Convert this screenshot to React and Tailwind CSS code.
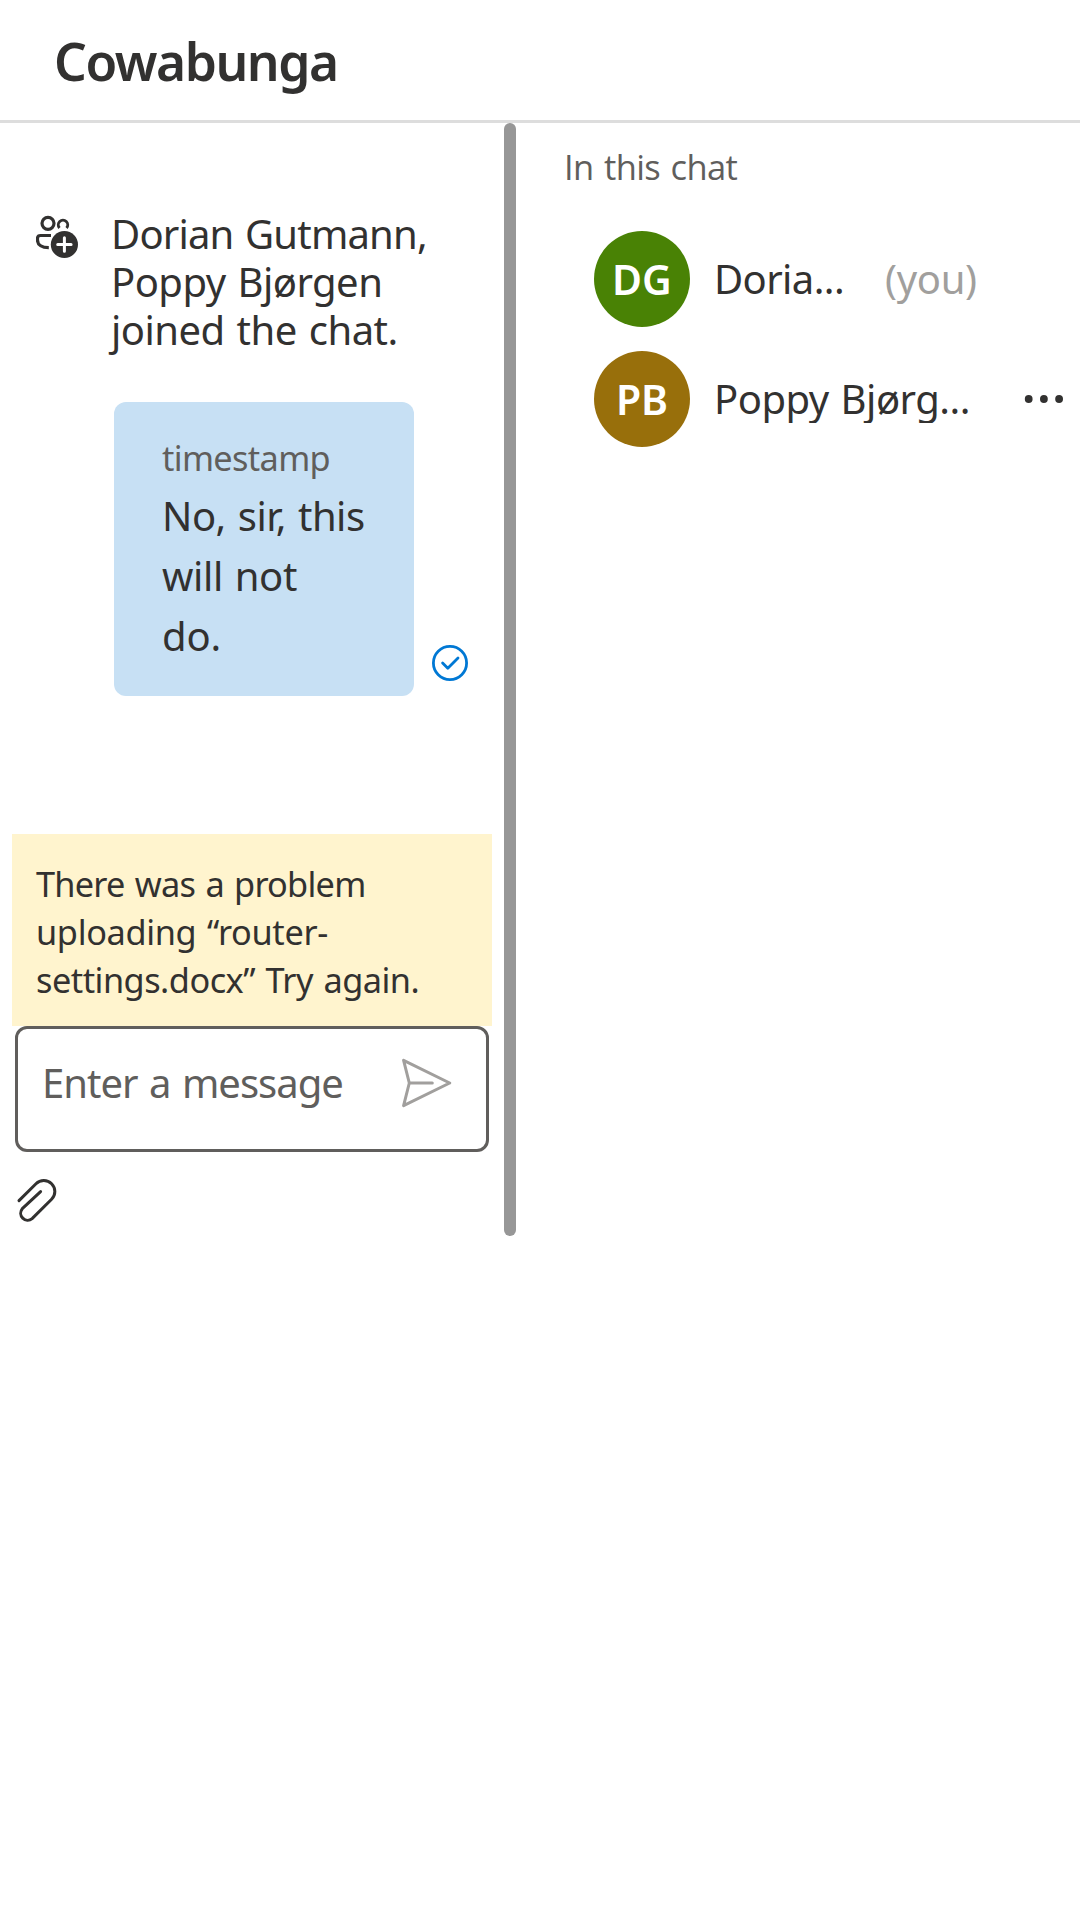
function PeopleAddIcon() {
  return (
    <svg className="mt-[5px] h-[45px] w-[45px] shrink-0" viewBox="36 215 45 45" fill="none" stroke="#323130" strokeWidth="3.2" strokeLinecap="butt">
      <circle cx="48" cy="223.3" r="6" />
      <path d="M59.5 228 A4.7 4.7 0 1 1 66.5 228" strokeWidth="2.9" />
      <path d="M51 235.5 H40.5 Q37.5 235.5 37.5 238.5 V240 C37.5 245 42 247.6 48.8 247.6" />
      <circle cx="64.4" cy="244.5" r="13.6" fill="#323130" stroke="none" />
      <path d="M64.4 237.8 V251.2 M57.7 244.5 H71.1" stroke="#fff" strokeWidth="3" strokeLinecap="round" />
    </svg>
  );
}

function SeenIcon() {
  return (
    <svg className="mb-[15px] ml-[18px] h-9 w-9" viewBox="0 0 36 36" fill="none" stroke="#0078d4" strokeWidth="2.8" strokeLinecap="round" strokeLinejoin="round">
      <circle cx="18" cy="18" r="16.6" />
      <path d="M10.6 18 L15.8 23.2 L26 13" />
    </svg>
  );
}

function SendIcon() {
  return (
    <svg className="mt-[29px] h-[51px] w-[51px]" viewBox="402 1058 51 51" fill="none" stroke="#a19f9d" strokeWidth="3" strokeLinejoin="round" strokeLinecap="round">
      <path d="M403.6 1060.3 L449.7 1083 L403.6 1105.7 L409.3 1083 Z M409.3 1083 H432.3" />
    </svg>
  );
}

function AttachIcon() {
  return (
    <svg className="ml-[15px] mt-[25px] h-[48px] w-[42px]" viewBox="15 1177 42 48" fill="none" stroke="#323130" strokeWidth="3" strokeLinecap="round" strokeLinejoin="round">
      <path d="M19 1200.6 L36 1183.7 A11 11 0 0 1 51.6 1199.3 L32.1 1218.6 A7 7 0 0 1 22.3 1208.7 L40.6 1191.6" />
    </svg>
  );
}

function Avatar({ initials, color }) {
  return (
    <div className={`flex h-24 w-24 shrink-0 items-center justify-center rounded-full text-[41px] leading-[60px] font-semibold text-white ${color}`}>
      <span>{initials}</span>
    </div>
  );
}

export default function App() {
  return (
    <div className="h-[1920px] w-[1080px] overflow-hidden bg-white font-['Noto_Sans',sans-serif] text-[40px] whitespace-nowrap text-[#323130] [word-spacing:2px]">
      <header className="h-[123px] border-b-[3px] border-[#dddddd] pt-[2px] pl-[54px]">
        <h1 className="text-[51.5px] leading-[118px] font-semibold tracking-[-1.45px]">Cowabunga</h1>
      </header>
      <div className="flex">
        <section className="flex h-[1113px] w-[504px] flex-col">
          <div className="flex pt-[87px] pl-[36px] leading-[48px]">
            <PeopleAddIcon />
            <div className="ml-[30px]">
              <div className="tracking-[-0.82px]">Dorian Gutmann,</div>
              <div className="tracking-[-0.52px]">Poppy Bjørgen</div>
              <div className="tracking-[-0.5px]">joined the chat.</div>
            </div>
          </div>
          <div className="mt-[48px] flex items-end pl-[114px]">
            <div className="h-[294px] w-[300px] rounded-[12px] bg-[#c7e0f4] pt-[32px] pl-[48px]">
              <div className="text-[34.3px] leading-[48px] tracking-[-0.65px] text-[#605e5c]">timestamp</div>
              <div className="mt-1 leading-[60px]">
                <div className="tracking-[-0.5px]">No, sir, this</div>
                <div className="tracking-[-0.4px]">will not</div>
                <div className="tracking-[-0.2px]">do.</div>
              </div>
            </div>
            <SeenIcon />
          </div>
          <div className="mt-[138px] ml-3 h-[192px] w-[480px] bg-[#fff4ce] pt-[26px] pl-6 text-[34.3px] leading-[48px]">
            <div className="tracking-[-0.75px]">There was a problem</div>
            <div className="tracking-[-0.33px]">uploading “router-</div>
            <div className="tracking-[-0.5px]">settings.docx” Try again.</div>
          </div>
          <div className="ml-[15px] flex h-[126px] w-[474px] justify-between rounded-[12px] border-[3px] border-[#605e5c] pr-[33px] pl-[24px]">
            <div className="pt-[24px] leading-[60px] tracking-[-0.98px] text-[#605e5c]">Enter a message</div>
            <SendIcon />
          </div>
          <AttachIcon />
        </section>
        <div className="h-[1113px] w-3 rounded-full bg-[#979797]" />
        <aside className="flex w-[564px] flex-col pl-12">
          <h2 className="pt-[20px] font-['Open_Sans',sans-serif] text-[34.5px] leading-[48px] tracking-[-0.6px] text-[#605e5c]">In this chat</h2>
          <div className="mt-[40px] ml-[30px] flex h-24 items-center">
            <Avatar initials="DG" color="bg-[#498205]" />
            <div className="ml-[24px] w-[171px] leading-[54px] tracking-[-0.6px]">Doria...</div>
            <div className="leading-[54px] tracking-[-0.3px] text-[#a19f9d]">(you)</div>
          </div>
          <div className="mt-6 ml-[30px] flex h-24 items-center">
            <Avatar initials="PB" color="bg-[#986f0b]" />
            <div className="ml-[24px] h-[48px] w-[310px] overflow-hidden leading-[48px] tracking-[-0.5px]">Poppy Bjørg...</div>
            <svg className="h-[10px] w-[40px]" viewBox="0 0 40 10" fill="#323130">
              <circle cx="4.7" cy="5" r="3.9" />
              <circle cx="19.9" cy="5" r="3.9" />
              <circle cx="35.1" cy="5" r="3.9" />
            </svg>
          </div>
        </aside>
      </div>
    </div>
  );
}
